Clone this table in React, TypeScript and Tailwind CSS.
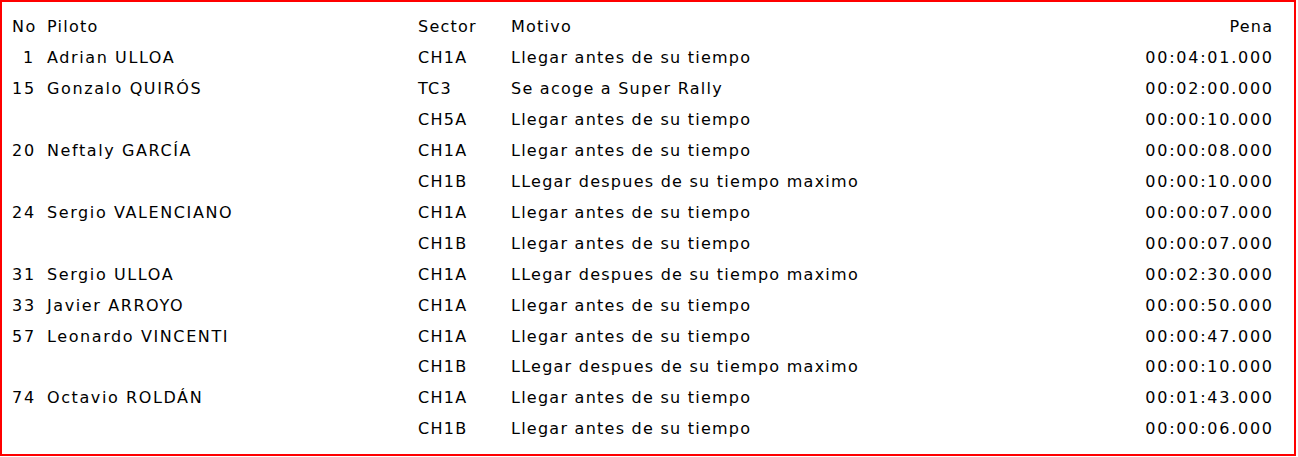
const rows = [
  { no: "1", piloto: "Adrian ULLOA", sector: "CH1A", motivo: "Llegar antes de su tiempo", pena: "00:04:01.000" },
  { no: "15", piloto: "Gonzalo QUIRÓS", sector: "TC3", motivo: "Se acoge a Super Rally", pena: "00:02:00.000" },
  { no: "", piloto: "", sector: "CH5A", motivo: "Llegar antes de su tiempo", pena: "00:00:10.000" },
  { no: "20", piloto: "Neftaly GARCÍA", sector: "CH1A", motivo: "Llegar antes de su tiempo", pena: "00:00:08.000" },
  { no: "", piloto: "", sector: "CH1B", motivo: "LLegar despues de su tiempo maximo", pena: "00:00:10.000" },
  { no: "24", piloto: "Sergio VALENCIANO", sector: "CH1A", motivo: "Llegar antes de su tiempo", pena: "00:00:07.000" },
  { no: "", piloto: "", sector: "CH1B", motivo: "Llegar antes de su tiempo", pena: "00:00:07.000" },
  { no: "31", piloto: "Sergio ULLOA", sector: "CH1A", motivo: "LLegar despues de su tiempo maximo", pena: "00:02:30.000" },
  { no: "33", piloto: "Javier ARROYO", sector: "CH1A", motivo: "Llegar antes de su tiempo", pena: "00:00:50.000" },
  { no: "57", piloto: "Leonardo VINCENTI", sector: "CH1A", motivo: "Llegar antes de su tiempo", pena: "00:00:47.000" },
  { no: "", piloto: "", sector: "CH1B", motivo: "LLegar despues de su tiempo maximo", pena: "00:00:10.000" },
  { no: "74", piloto: "Octavio ROLDÁN", sector: "CH1A", motivo: "Llegar antes de su tiempo", pena: "00:01:43.000" },
  { no: "", piloto: "", sector: "CH1B", motivo: "Llegar antes de su tiempo", pena: "00:00:06.000" },
];

export default function App() {
  return (
    <div className="w-[1298px] h-[457px] bg-white">
      <div className="w-[1296px] h-[456px] border-2 border-[#ff0000] pl-[10px] pr-[22px] pt-[10px] text-[16px] text-black tracking-[1.25px] font-['DejaVu_Sans',sans-serif]">
        {/* header */}
        <div className="flex items-center h-[30.92px]">
          <div className="w-[23px] tracking-[1.6px]">No</div>
          <div className="w-[383px] pl-[12px]">Piloto</div>
          <div className="w-[93px]">Sector</div>
          <div className="flex-1">Motivo</div>
          <div className="text-right mr-[-1.25px]">Pena</div>
        </div>
        {rows.map((r, i) => (
          <div key={i} className="flex items-center h-[30.92px]">
            <div className="w-[23px] text-right tracking-[1.75px] mr-[-1.75px]">{r.no}</div>
            <div className="w-[384.75px] pl-[13.75px] tracking-[1.6px]">{r.piloto}</div>
            <div className="w-[93px]">{r.sector}</div>
            <div className="flex-1">{r.motivo}</div>
            <div className="text-right tracking-[1.75px] mr-[-1.75px]">{r.pena}</div>
          </div>
        ))}
      </div>
    </div>
  );
}
